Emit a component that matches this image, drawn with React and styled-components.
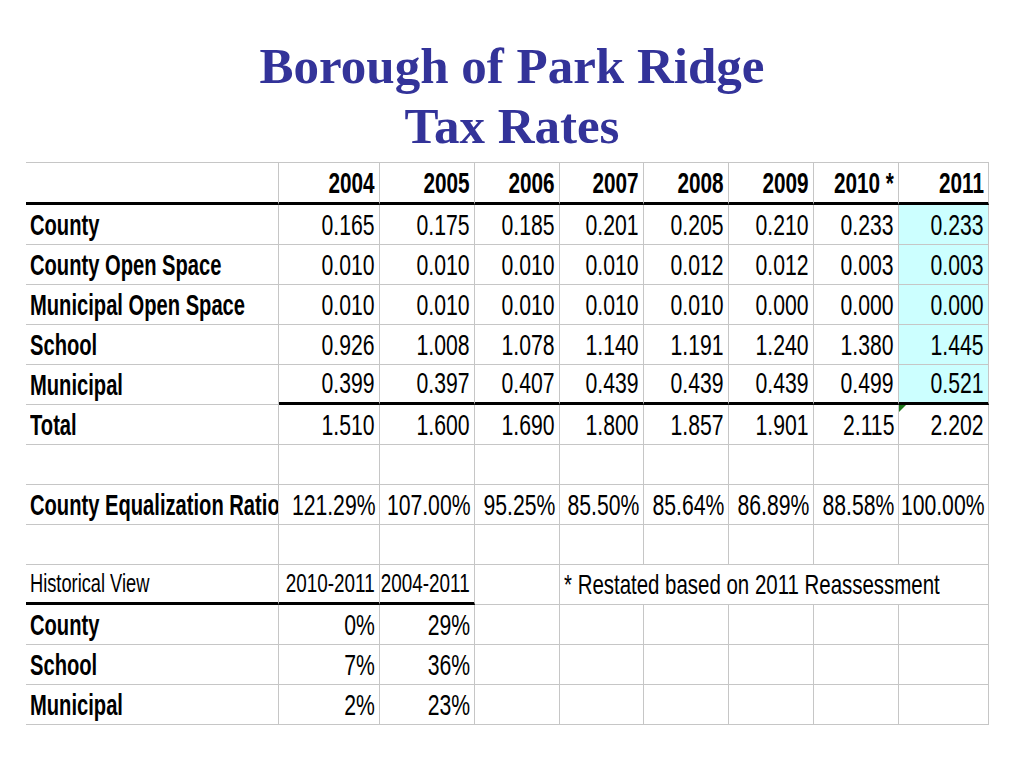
import React from "react";
import styled, { createGlobalStyle } from "styled-components";

const GlobalStyle = createGlobalStyle`
  html, body { margin: 0; padding: 0; background: #ffffff; }
`;

const Slide = styled.div`
  width: 1024px;
  height: 768px;
  box-sizing: border-box;
  padding-top: 36px;
  background: #ffffff;
  display: flex;
  flex-direction: column;
  align-items: center;
  overflow: hidden;
`;

const Title = styled.h1`
  margin: 0;
  text-align: center;
  font-family: "Liberation Serif", "Times New Roman", serif;
  font-weight: 700;
  font-size: 51px;
  line-height: 60px;
  color: #333399;
`;

const Sheet = styled.div`
  align-self: flex-start;
  margin: 6px 0 0 26px;
  display: grid;
  grid-template-columns: 253px 101px 95px 85px 84px 85px 85px 85px 90px;
  grid-template-rows: 42px repeat(13, 40px);
  border-top: 1px solid #c6c6c6;
`;

const Cell = styled.div`
  position: relative;
  box-sizing: border-box;
  grid-column: span ${(p) => p.$span || 1};
  display: flex;
  align-items: flex-end;
  justify-content: ${(p) => (p.$left ? "flex-start" : "flex-end")};
  padding: 0 4px 4px 4px;
  border-right: 1px solid #c6c6c6;
  border-bottom: ${(p) => (p.$thick ? "3px solid #000000" : "1px solid #c6c6c6")};
  background: ${(p) => (p.$fill ? "#ccffff" : "#ffffff")};
  font-family: "Liberation Sans", Arial, sans-serif;
  font-size: ${(p) => p.$size || 29}px;
  font-weight: ${(p) => (p.$bold ? 700 : 400)};
  line-height: 30px;
  color: #000000;
  white-space: nowrap;
  overflow: hidden;
`;

/* Narrow (Arial Narrow–like) rendering of the spreadsheet text */
const Narrow = styled.span`
  display: inline-block;
  flex: none;
  transform: scaleX(${(p) => p.$sx || 0.73});
  transform-origin: ${(p) => (p.$left ? "left" : "right")} center;
`;

const ErrorMark = styled.span`
  position: absolute;
  top: 0;
  left: 0;
  width: 0;
  height: 0;
  border-top: 7px solid #1f7a1f;
  border-right: 7px solid transparent;
`;

const years = ["2004", "2005", "2006", "2007", "2008", "2009", "2010 *", "2011"];

const rateRows = [
  ["County", ["0.165", "0.175", "0.185", "0.201", "0.205", "0.210", "0.233", "0.233"]],
  ["County Open Space", ["0.010", "0.010", "0.010", "0.010", "0.012", "0.012", "0.003", "0.003"]],
  ["Municipal Open Space", ["0.010", "0.010", "0.010", "0.010", "0.010", "0.000", "0.000", "0.000"]],
  ["School", ["0.926", "1.008", "1.078", "1.140", "1.191", "1.240", "1.380", "1.445"]],
  ["Municipal", ["0.399", "0.397", "0.407", "0.439", "0.439", "0.439", "0.499", "0.521"]],
];

const totals = ["1.510", "1.600", "1.690", "1.800", "1.857", "1.901", "2.115", "2.202"];

const ratios = ["121.29%", "107.00%", "95.25%", "85.50%", "85.64%", "86.89%", "88.58%", "100.00%"];

const history = [
  ["County", "0%", "29%"],
  ["School", "7%", "36%"],
  ["Municipal", "2%", "23%"],
];

const blanks = (n, key) =>
  Array.from({ length: n }, (_, i) => <Cell key={`${key}-${i}`} />);

const Label = ({ children, thick, size, regular }) => (
  <Cell $left $bold={!regular} $thick={thick} $size={size}>
    <Narrow $left $sx={regular ? 0.73 : 0.695}>
      {children}
    </Narrow>
  </Cell>
);

const Value = ({ children, fill, thick, bold, size, sx }) => (
  <Cell $fill={fill} $thick={thick} $bold={bold} $size={size}>
    <Narrow $sx={sx || (bold ? 0.715 : 0.73)}>{children}</Narrow>
  </Cell>
);

export default function App() {
  return (
    <>
      <GlobalStyle />
      <Slide>
        <Title>
          Borough of Park Ridge
          <br />
          Tax Rates
        </Title>
        <Sheet>
          <Cell $thick />
          {years.map((y) => (
            <Value key={y} thick bold>
              {y}
            </Value>
          ))}

          {rateRows.map(([label, vals], r) => {
            const last = r === rateRows.length - 1;
            return (
              <React.Fragment key={label}>
                <Label>{label}</Label>
                {vals.map((v, i) => (
                  <Value key={i} thick={last} fill={i === 7}>
                    {v}
                  </Value>
                ))}
              </React.Fragment>
            );
          })}

          <Label>Total</Label>
          {totals.map((v, i) => (
            <Cell key={`t${i}`}>
              {i === 7 && <ErrorMark />}
              <Narrow>{v}</Narrow>
            </Cell>
          ))}

          {blanks(9, "b1")}

          <Label>County Equalization Ratio</Label>
          {ratios.map((v, i) => (
            <Value key={`r${i}`}>{v}</Value>
          ))}

          {blanks(9, "b2")}

          <Label thick regular size={25}>
            Historical View
          </Label>
          <Value thick size={25} sx={0.755}>
            2010-2011
          </Value>
          <Value thick size={25} sx={0.755}>
            2004-2011
          </Value>
          <Cell />
          <Cell $left $span={5} $size={28}>
            <Narrow $left>* Restated based on 2011 Reassessment</Narrow>
          </Cell>

          {history.map(([label, a, b]) => (
            <React.Fragment key={`h${label}`}>
              <Label>{label}</Label>
              <Value>{a}</Value>
              <Value>{b}</Value>
              {blanks(6, `h${label}`)}
            </React.Fragment>
          ))}
        </Sheet>
      </Slide>
    </>
  );
}
